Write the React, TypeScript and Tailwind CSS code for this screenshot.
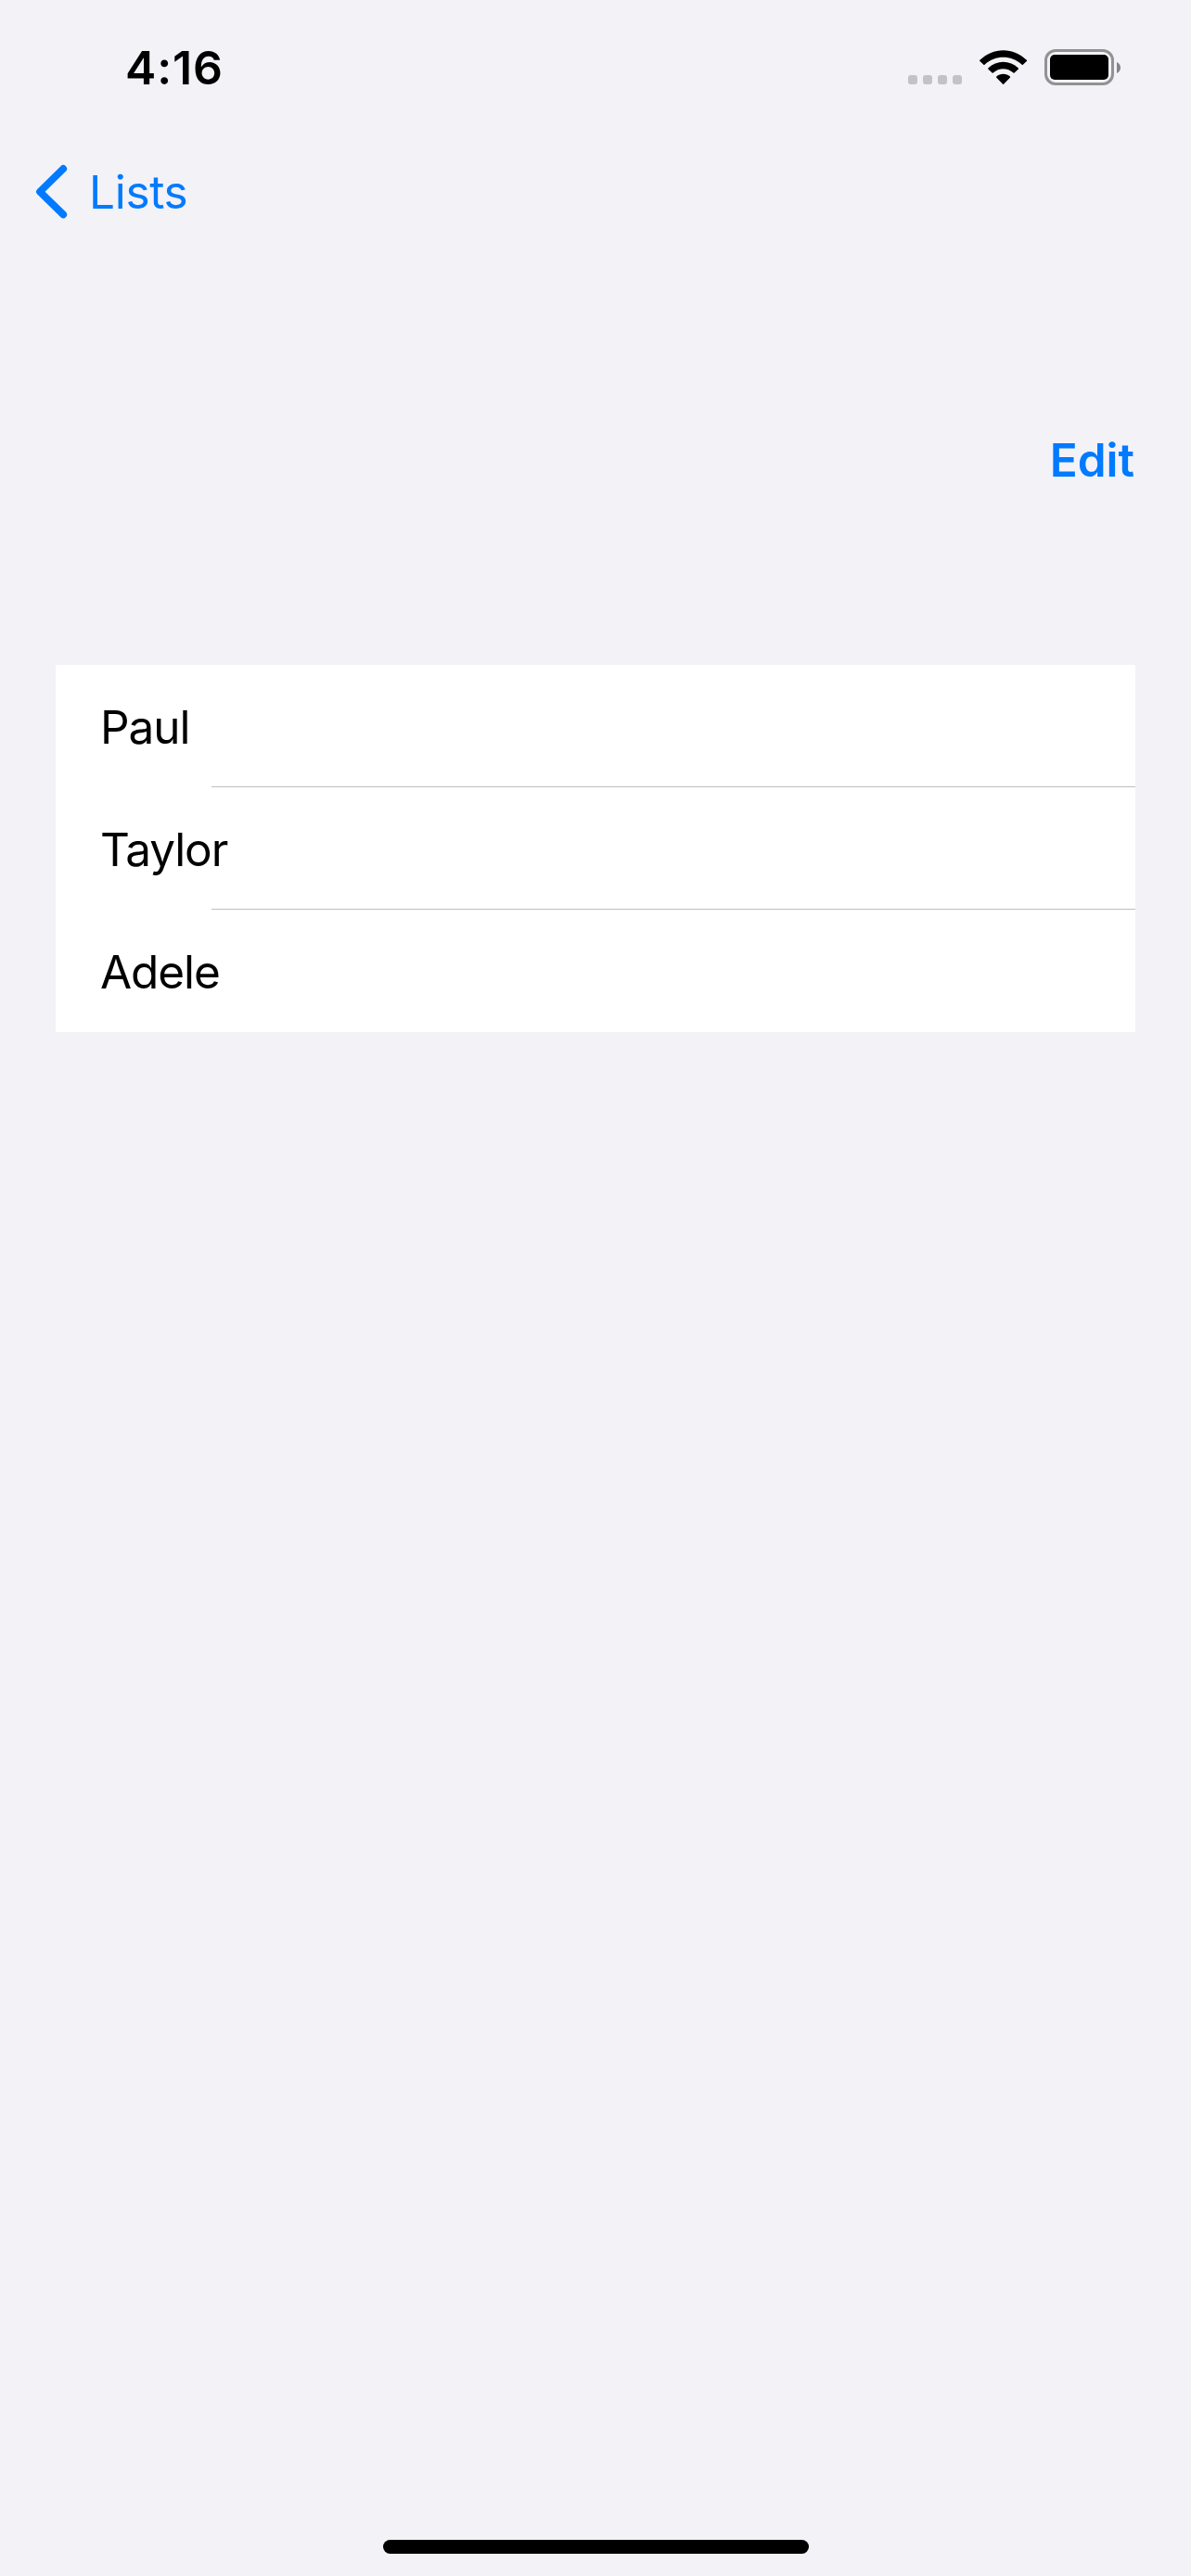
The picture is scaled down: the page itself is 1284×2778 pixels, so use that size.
import React from "react";

const names = ["Paul", "Taylor", "Adele"];

function WifiIcon() {
  return (
    <svg className="ml-[19px] h-[38px] w-[52px]" viewBox="0 0 52 38" fill="currentColor">
      <path d="M0.4 10.8C14.5-3.4 36.8-3.4 50.8 10.8C51.2 11.2 51.2 11.6 50.8 12L46.8 15.7C46.5 16 46 16 45.7 15.7C34 5.2 17.2 5.2 5.5 15.7C5.2 16 4.7 16 4.4 15.7L0.4 12C0 11.6 0 11.2 0.4 10.8Z" />
      <path d="M9.3 19.4C18.5 10.6 32.7 10.6 41.9 19.4C42.2 19.8 42.2 20.2 41.9 20.5L37.6 24.6C37.3 24.9 36.8 24.9 36.5 24.6C30.2 18.7 21 18.7 14.7 24.6C14.4 24.9 13.9 24.9 13.6 24.6L9.3 20.5C9 20.2 9 19.8 9.3 19.4Z" />
      <path d="M18.3 28.5C22.3 24.7 28.9 24.7 32.9 28.5C33.3 28.9 33.3 29.3 32.9 29.7L26.3 36.6C25.9 37 25.3 37 24.9 36.6L18.3 29.7C17.9 29.3 17.9 28.9 18.3 28.5Z" />
    </svg>
  );
}

function StatusBar() {
  return (
    <header className="flex h-[146px] items-start justify-between pl-[135px] pr-[76px]">
      <time className="mt-[43px] text-[50px] leading-[60px] font-semibold tracking-[0.9px]">4:16</time>
      <div className="mt-[53px] flex h-[39px] items-start">
        <div className="mt-[28px] flex gap-[6px]">
          {[0, 1, 2, 3].map((i) => (
            <span key={i} className="size-[10px] rounded-[3px] bg-[#c3c2c7]" />
          ))}
        </div>
        <div className="mt-px flex">
          <WifiIcon />
        </div>
        <div className="ml-[18px] h-[39px] w-[75px] rounded-[12px] border-[3px] border-[#929194] p-[3px]">
          <div className="h-full w-full rounded-[5px] bg-black" />
        </div>
        <svg className="mt-[14px] ml-[3px] h-[12px] w-[4px]" viewBox="0 0 4 12" fill="#858488">
          <path d="M0 0C2.4 1 4 3.300 4 6S2.400 11 0 12Z" />
        </svg>
      </div>
    </header>
  );
}

export default function App() {
  return (
    <div className="flex h-[2778px] w-[1284px] flex-col overflow-hidden bg-[#f2f2f7] font-[Inter,sans-serif] text-[49.5px] leading-[60px] text-black">
      <StatusBar />
      <nav className="flex h-[122px] items-center pl-[38px] text-[#007aff]">
        <svg className="h-[60px] w-[36px]" viewBox="0 0 36 60" fill="none" stroke="currentColor" strokeWidth="7.8" strokeLinecap="round" strokeLinejoin="round">
          <path d="M30.200 5L5 29.700L30.200 54.400" />
        </svg>
        <button className="ml-[22px] tracking-[-0.3px]">Lists</button>
      </nav>
      <div className="mt-[198px] flex justify-end pr-[61px] text-[#007aff]">
        <button className="font-semibold">Edit</button>
      </div>
      <ul className="mx-[60px] mt-[191px] bg-white">
        {names.map((name, i) => (
          <li key={name} className="flex h-[132px] flex-col">
            <span className="mt-[37px] pl-[48px] tracking-[-1.1px]">{name}</span>
            {i < names.length - 1 && <div className="mt-auto ml-[168px] h-px bg-[#bebec0]" />}
          </li>
        ))}
      </ul>
      <div className="mx-auto mt-auto mb-[24px] h-[15px] w-[459px] rounded-full bg-black" />
    </div>
  );
}
